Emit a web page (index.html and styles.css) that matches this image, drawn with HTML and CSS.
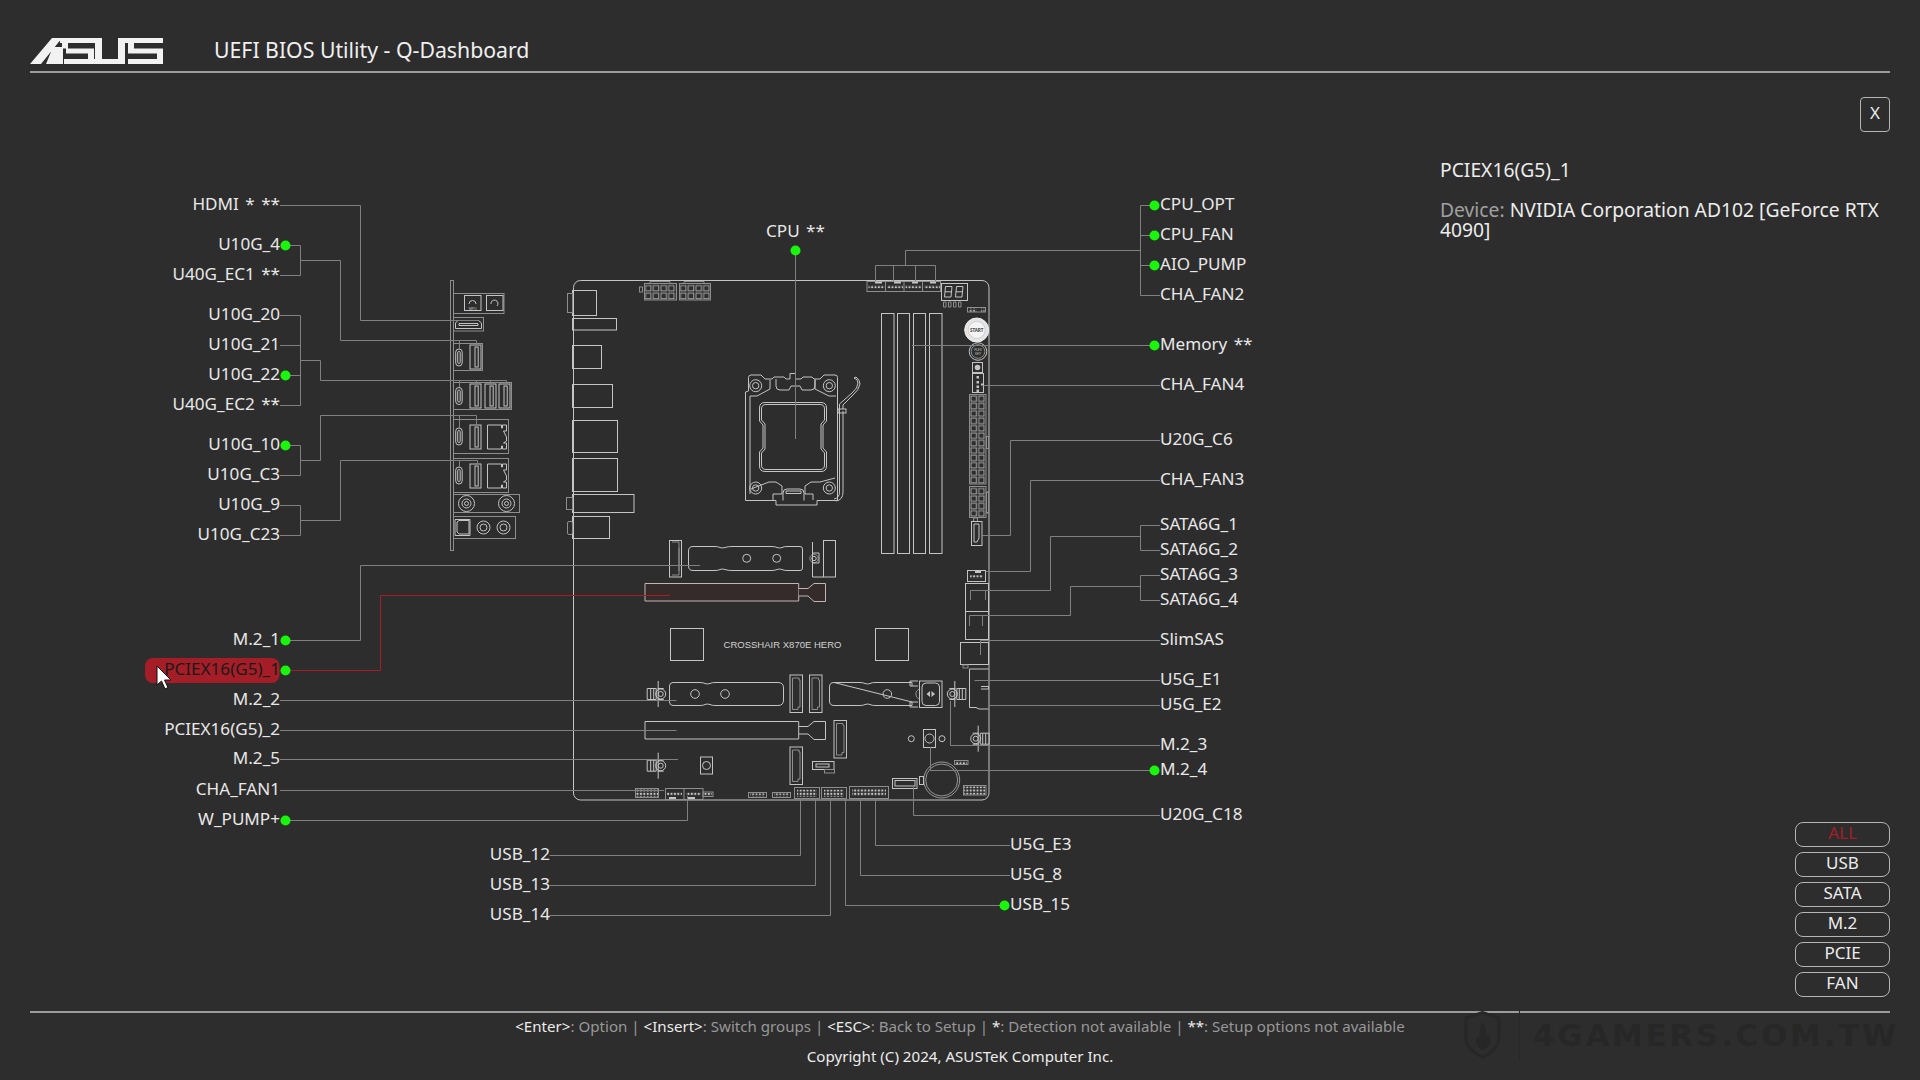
FILE: index.html
```html
<!DOCTYPE html>
<html lang="en">
<head>
<meta charset="utf-8">
<title>UEFI BIOS Utility - Q-Dashboard</title>
<link rel="stylesheet" href="styles.css">
</head>
<body>
<header class="top">
  <svg class="logo" viewBox="30 38 133 26" width="133" height="26" aria-label="ASUS">
    <path d="M30 64 L52 38 H62 L41 64Z M60 38 H102 V43 H60Z M118 38 H163 V43 H118Z M53 47 H63 V64 H46Z M66 48.500 H94 V53.500 H66Z M64 59 H125 V64 H64Z M95 43 H102 V59 H95Z M118 43 H125 V59 H118Z M128 48.500 H163 V53.500 H128Z M128 59 H163 V64 H128Z M62 43 H68 V48.500 H62Z M88 53.500 H94 V59 H88Z M128 43 H134 V48.500 H128Z M157 53.500 H163 V59 H157Z"/>
  </svg>
  <h1 class="title">UEFI BIOS Utility - Q-Dashboard</h1>
</header>

<main class="main">
  <svg class="diagram" viewBox="0 73 1440 938" width="1440" height="938">
    <defs>
      <pattern id="cAtx" patternUnits="userSpaceOnUse" x="970" y="395" width="7.700" height="7.400"><rect x="1" y="1" width="5.400" height="5.400" class="cell"/></pattern>
      <pattern id="c8p" patternUnits="userSpaceOnUse" x="970" y="487.500" width="7.700" height="7.400"><rect x="1" y="1" width="5.400" height="5.400" class="cell"/></pattern>
      <pattern id="cP1" patternUnits="userSpaceOnUse" x="644.500" y="284.500" width="7.700" height="7.700"><rect x="1" y="1" width="5.500" height="5.500" class="cell"/></pattern>
      <pattern id="cP2" patternUnits="userSpaceOnUse" x="679.500" y="284.500" width="7.700" height="7.700"><rect x="1" y="1" width="5.500" height="5.500" class="cell"/></pattern>
      <pattern id="dots" patternUnits="userSpaceOnUse" width="3.400" height="3.400"><rect x="0.700" y="0.700" width="2" height="2" class="dotfill"/></pattern>
      <g id="usbc"><rect x="0" y="0" width="6.500" height="17" rx="3.200" class="part"/><rect x="2" y="2.500" width="2.500" height="12" rx="1.200" class="part"/></g>
      <g id="usba"><rect x="0" y="0" width="11" height="24" class="part"/><rect x="5" y="2" width="3.200" height="20" class="part"/></g>
      <g id="rj45"><path class="part" d="M0 0 H14 V3 H15 V0 H19 V6 H16 L19 12 V16 L16 18 H19 V24 H15 V21 H14 V24 H0Z"/></g>
      <g id="standoff">
        <circle r="5" class="part"/><circle r="2.500" class="part"/><path class="part" d="M-3 -5.500 H3 M-3 5.500 H3"/>
        <path class="part" d="M-2.500 -13 V13 M-13.500 -5.500 H-4.500 V5.500 H-13.500Z M-10 -5.500 V5.500 M-7 -5.500 V5.500"/>
      </g>
      <g id="mslot"><rect width="12.500" height="37.500" class="part"/><path class="dim" d="M2.500 3 H9 V5 H10 V32 H8 V34.500 H2.500Z"/></g>
    </defs>

    <!-- I/O shield -->
    <g>
      <rect x="450.500" y="280.500" width="3" height="270" class="dim"/>
      <rect x="453.500" y="293.500" width="50.500" height="20" class="dim"/>
      <rect x="464.500" y="295.500" width="16.500" height="15" class="part"/><rect x="486.500" y="295.500" width="16.500" height="15" class="part"/>
      <path class="part" d="M469 304 a3.500 3.500 0 1 1 7 0 M491 304 a3.500 3.500 0 1 1 6 2"/>
      <text x="472.700" y="309.500" class="tiny" text-anchor="middle">MPO</text>
      <rect x="453.500" y="317.500" width="30" height="13.500" class="dim"/>
      <path class="part" d="M455.500 323 L458 320.500 H478.500 L481.500 323 V328.500 H455.500Z M459 323.500 H478 V325.500 H459Z"/>
      <rect x="453.500" y="343.500" width="29" height="27" class="dim"/>
      <use href="#usbc" x="455.700" y="349"/><use href="#usba" x="470" y="345"/>
      <rect x="453.500" y="382.500" width="58" height="27" class="dim"/>
      <use href="#usbc" x="455.700" y="387.500"/><use href="#usba" x="470" y="384"/><use href="#usba" x="485" y="384"/><use href="#usba" x="499" y="384"/>
      <rect x="453.500" y="419.500" width="55" height="34" class="dim"/>
      <use href="#usbc" x="455.700" y="428"/><use href="#usba" x="470" y="425"/><use href="#rj45" x="487.500" y="425"/>
      <rect x="453.500" y="458.500" width="55" height="34" class="dim"/>
      <use href="#usbc" x="455.700" y="467"/><use href="#usba" x="470" y="464"/><use href="#rj45" x="487.500" y="464"/>
      <rect x="453.500" y="494.500" width="66" height="18" class="dim"/>
      <circle cx="466.500" cy="503.500" r="8" class="part"/><circle cx="466.500" cy="503.500" r="4.500" class="part"/><circle cx="466.500" cy="503.500" r="2" class="part"/>
      <circle cx="506.500" cy="503.500" r="8" class="part"/><circle cx="506.500" cy="503.500" r="4.500" class="part"/><circle cx="506.500" cy="503.500" r="2" class="part"/>
      <rect x="453.500" y="516.500" width="62" height="22" class="dim"/>
      <path class="part" d="M455 519.500 H470 V535.500 H455Z M457 522 L459 520.500 H469 V534 H459 L457 532Z"/>
      <circle cx="483.500" cy="527.500" r="6.500" class="part"/><circle cx="483.500" cy="527.500" r="3.500" class="part"/>
      <circle cx="503.500" cy="527.500" r="6.500" class="part"/><circle cx="503.500" cy="527.500" r="3.500" class="part"/>
    </g>

    <!-- board -->
    <g>
      <rect x="573.500" y="280.500" width="415.500" height="519.500" rx="7" class="part"/>
      <rect x="572.500" y="290.500" width="24" height="25" class="part"/><rect x="567.500" y="293.500" width="5" height="19" class="dim"/>
      <rect x="572.500" y="318.500" width="44" height="11.500" class="part"/>
      <rect x="572.500" y="345.500" width="29" height="23" class="part"/>
      <rect x="572.500" y="384.500" width="40" height="23" class="part"/>
      <rect x="572.500" y="420.500" width="45" height="32" class="part"/>
      <rect x="572.500" y="458.500" width="45" height="33" class="part"/>
      <rect x="572.500" y="494.500" width="61.500" height="18" class="part"/><rect x="566.500" y="497.500" width="6" height="12" class="dim"/>
      <rect x="572.500" y="516.500" width="37" height="22" class="part"/><rect x="567.500" y="521.500" width="5" height="13" rx="1.500" class="dim"/>

      <!-- power -->
      <rect x="639.500" y="287" width="3" height="5" class="dim"/>
      <rect x="644.500" y="284.500" width="31" height="15.500" fill="url(#cP1)"/>
      <rect x="644.500" y="283.500" width="32" height="16.500" class="dim"/><path class="dim" d="M650 283.500 V281.500 H670 V283.500"/>
      <rect x="679.500" y="284.500" width="31" height="15.500" fill="url(#cP2)"/>
      <rect x="679.500" y="283.500" width="31" height="16.500" class="dim"/><path class="dim" d="M684 283.500 V281.500 H704 V283.500"/>

      <!-- fans top -->
      <rect x="867" y="281.500" width="73.500" height="10" class="dim"/>
      <path class="dim" d="M885.500 281.500 V291.500 M904 281.500 V291.500 M922.500 281.500 V291.500"/>
      <rect x="868.500" y="285" width="16" height="3.500" fill="url(#dots)"/><rect x="887" y="285" width="16" height="3.500" fill="url(#dots)"/><rect x="905.500" y="285" width="16" height="3.500" fill="url(#dots)"/><rect x="924" y="285" width="16" height="3.500" fill="url(#dots)"/>
      <path class="fillpart" d="M875 281.500 h7 v2 h-7z M894 281.500 h7 v2 h-7z M912 281.500 h6 v2 h-6z M930 281.500 h6 v2 h-6z"/>

      <!-- debug LED -->
      <rect x="941.500" y="283.500" width="26" height="17" class="part"/>
      <path class="part" d="M945.500 286.500 H952 L951 297 H944.500Z M945 291.800 H951.500 M956.500 286.500 H963 L962 297 H955.500Z M956 291.800 H962.500"/>
      <path class="dim" d="M943.500 302 h2.500 v5 h-2.500z M948.500 302 h2.500 v5 h-2.500z M953.500 302 h2.500 v5 h-2.500z M958.500 302 h2.500 v5 h-2.500z"/>
      <rect x="967.500" y="307.500" width="18" height="4.500" class="dim"/>
      <rect x="969" y="308.500" width="7.500" height="3" fill="url(#dots)"/><rect x="981" y="308.500" width="3.500" height="3" fill="url(#dots)"/>

      <!-- DIMMs -->
      <rect x="881.500" y="313.500" width="12.500" height="240" class="part"/>
      <rect x="897.500" y="313.500" width="12" height="240" class="part"/>
      <rect x="913.500" y="313.500" width="12" height="240" class="part"/>
      <rect x="929.500" y="313.500" width="12.500" height="240" class="part"/>

      <!-- buttons -->
      <circle cx="976.700" cy="330" r="12" class="startbtn"/>
      <circle cx="976.700" cy="330" r="8.500" class="startin"/>
      <text x="976.700" y="332" class="starttext" text-anchor="middle">START</text>
      <circle cx="978" cy="351.500" r="8.800" class="part"/><circle cx="978" cy="351.500" r="6.800" class="dim"/>
      <text x="978" y="351" class="tiny" text-anchor="middle">FLEX</text><text x="978" y="355" class="tiny" text-anchor="middle">KEY</text>
      <rect x="972.500" y="362.500" width="10" height="10" class="part"/><circle cx="977.500" cy="367.500" r="2.800" class="fillpart"/>
      <rect x="972.500" y="373.500" width="11" height="19" class="part"/>
      <path class="fillpart" d="M976.500 376 h2.500 v2.500 h-2.500z M976.500 381 h2.500 v2.500 h-2.500z M976.500 385.500 h2.500 v2.500 h-2.500z M976.500 389.500 h2.500 v2.500 h-2.500z M981 383.500 h2 v2 h-2z"/>

      <!-- ATX -->
      <rect x="970" y="395" width="15.400" height="88.800" fill="url(#cAtx)"/>
      <rect x="969.500" y="394.500" width="16.500" height="89.500" class="dim"/>
      <rect x="986.500" y="436.500" width="2" height="12" class="dim"/>
      <rect x="970" y="487.500" width="15.400" height="29.600" fill="url(#c8p)"/>
      <rect x="969.500" y="486.500" width="16.500" height="31" class="dim"/>
      <rect x="986.500" y="492" width="2" height="21" class="dim"/>
      <rect x="973.500" y="518" width="4" height="3.500" class="dim"/>
      <rect x="971.500" y="521.500" width="10.500" height="24" class="part"/>
      <path class="part" d="M974 524 H979 V538 L977 542 H974Z"/>

      <!-- socket -->
      <g>
        <path class="part" d="M745.500 500.500 V392 L748.500 391 V377.500 Q748.500 375 751 375 H761 L765 379 H772 L774 377 H784 L786 379 H790 V373.500 H795.500 V379 H801 L803 377 H812 L814 379 H820 L824 375 H835 Q837.500 375 837.500 377.500 V500.500 H817 V505 H776 V500.500Z"/>
        <path class="part" d="M750 396 V494 M750 396 H757 L770 389 V380 M836 396 H829 L815 389 V380"/>
        <path class="part" d="M776 379 V386 Q776 390 780 390 H789 L791 386 H800 L802 390 H811 Q815 390 815 386 V379"/>
        <path class="part" d="M751 489 L769 482 H776 L782 486 V494 H773 V500 M835 478 L820 482 H811 L805 486 V494 H813 V500"/>
        <path class="part" d="M783 500.500 V493 Q783 489 787 489 H800 Q804 489 804 493 V500.500 M786 491 H801 V493.500 H786Z"/>
        <path class="part" d="M765 402.500 H821 Q826.500 402.500 826.500 408 V421 L823 425 V448 L826.500 452 V466 Q826.500 471.500 821 471.500 H765 Q759.500 471.500 759.500 466 V452 L763 448 V425 L759.500 421 V408 Q759.500 402.500 765 402.500Z"/>
        <path class="part" d="M766 404.500 H820 Q824.500 404.500 824.500 409 V420 L821 424 V449 L824.500 453 V465 Q824.500 469.500 820 469.500 H766 Q761.500 469.500 761.500 465 V453 L765 449 V424 L761.500 420 V409 Q761.500 404.500 766 404.500Z"/>
        <circle cx="755.700" cy="385.700" r="6" class="part"/><circle cx="755.700" cy="385.700" r="3.200" class="part"/>
        <circle cx="829.300" cy="385.700" r="6" class="part"/><circle cx="829.300" cy="385.700" r="3.200" class="part"/>
        <circle cx="755.700" cy="488" r="6" class="part"/><circle cx="755.700" cy="488" r="3.200" class="part"/>
        <circle cx="829.300" cy="488" r="6" class="part"/><circle cx="829.300" cy="488" r="3.200" class="part"/>
        <path class="part" d="M839.500 404 V492 Q839.500 498 834 499 M843 411 V492 Q843 500 836 501"/>
        <path class="part" d="M839.500 404 L852 393 Q858 388 858 383 Q858 379 854 378 L856 377 Q860 380 860 384 Q859 390 853 395 L843 405 V409"/>
        <rect x="838" y="409" width="8" height="4" class="part"/>
      </g>

      <!-- M.2_1 area -->
      <rect x="669.500" y="540.500" width="12" height="36.500" class="part"/>
      <path class="dim" d="M672 542 H679 V575 H672 M679 548 V571"/>
      <path class="part" d="M693 546.500 H715 Q718 546.500 720 547.500 Q722 548.500 725 547.500 Q728 546.500 732 546.500 H772 Q775 546.500 777 547.500 Q780 548.500 782 547.500 Q784 546.500 787 546.500 H800 Q802.500 546.500 802.500 549 V568 Q802.500 570.500 800 570.500 H787 Q784 570.500 782 569.500 Q780 568.500 777 569.500 Q775 570.500 772 570.500 H732 Q728 570.500 725 569.500 Q722 568.500 720 569.500 Q718 570.500 715 570.500 H693 Q688.500 570.500 688.500 566 V551 Q688.500 546.500 693 546.500Z"/>
      <circle cx="746.700" cy="558.300" r="4" class="part"/><circle cx="776.700" cy="558.300" r="4" class="part"/>
      <circle cx="814" cy="558.500" r="4.200" class="dim"/><circle cx="814" cy="558.500" r="2.200" class="part"/>
      <path class="part" d="M812.500 542 V577 H823.500 M812.500 553 H819 V563 H812.500"/>
      <rect x="823.500" y="540.500" width="12" height="36.500" class="part"/>

      <!-- PCIe 1 (selected) -->
      <path class="pciehl" d="M645 583.500 H798.500 V601.500 H645Z"/>
      <path class="pcieline" d="M645 583.500 H798.700 V601 H645Z"/>
      <path class="pcieline" d="M798.700 588.500 H808 L814 583.500 H825.500 V601.500 H814 L808 596 H798.700"/>

      <!-- chips and silk -->
      <rect x="670.500" y="628.500" width="33" height="32" class="part"/>
      <rect x="875.500" y="628.500" width="33" height="32" class="part"/>
      <text x="723.500" y="647.500" class="silk" textLength="118" lengthAdjust="spacingAndGlyphs">CROSSHAIR X870E HERO</text>

      <!-- M.2_2 -->
      <use href="#standoff" x="660.700" y="694"/>
      <path class="part" d="M673 682.500 H700 Q703 682.500 705 683.500 Q707 684.500 710 683.500 Q712 682.500 715 682.500 H778 Q783.500 682.500 783.500 688 V700 Q783.500 705.500 778 705.500 H715 Q712 705.500 710 704.500 Q707 703.500 705 704.500 Q703 705.500 700 705.500 H673 Q669.500 705.500 669.500 702 V686 Q669.500 682.500 673 682.500Z"/>
      <circle cx="695" cy="694" r="4.300" class="part"/><circle cx="725" cy="694" r="4.300" class="part"/>
      <use href="#mslot" x="790" y="675"/>
      <use href="#mslot" x="809.500" y="675"/>

      <!-- M.2_3 -->
      <path class="part" d="M834 682.500 H860 Q863 682.500 865 683.500 Q868 684.500 870 683.500 Q872 682.500 875 682.500 H912 V686 M912 702 V705.500 H875 Q872 705.500 870 704.500 Q868 703.500 865 704.500 Q863 705.500 860 705.500 H834 Q829.500 705.500 829.500 701 V687 Q829.500 682.500 834 682.500Z"/>
      <circle cx="887.300" cy="694" r="4.300" class="part"/>
      <path class="dim" d="M919 689 A5.500 5.500 0 0 0 919 699"/>
      <path class="part" d="M910 681 H918 M910 707 H918 M910 681 V686 H918 M910 707 V702 H918"/>
      <rect x="919.500" y="681" width="22.500" height="26.500" class="part"/>
      <rect x="922" y="683" width="17.500" height="22.500" rx="4" class="part"/>
      <path class="fillpart" d="M926.500 694 L930 691 V697Z M935 694 L931.500 691 V697Z"/>
      <use href="#standoff" transform="translate(952.300 694) scale(-1 1)"/>

      <!-- right connectors -->
      <rect x="967.500" y="570.500" width="18" height="11" class="part"/>
      <rect x="970" y="575" width="13" height="3.500" fill="url(#dots)"/><path class="fillpart" d="M975 571 h6 v2 h-6z"/>
      <rect x="965.500" y="583.500" width="23" height="28" class="part"/><rect x="965.500" y="611.500" width="23" height="28" class="part"/>
      <rect x="960.500" y="642.500" width="28" height="22" class="part"/>
      <rect x="963" y="665" width="5" height="3" class="dim"/>
      <path class="part" d="M988.500 669 H969.500 V707.500 H976 L979 709 H988.500 M981 686.500 H988.500 V689 H981"/>

      <!-- PCIe 2 -->
      <path class="part" d="M645 721.500 H798.700 V739 H645Z"/>
      <path class="part" d="M798.700 726.500 H808 L814 721.500 H825.500 V739.500 H814 L808 734 H798.700"/>
      <use href="#mslot" x="834" y="720.500"/>
      <use href="#mslot" x="790" y="747"/>
      <rect x="812.500" y="761.500" width="21.500" height="8" class="part"/><rect x="816" y="764" width="13" height="3" class="part"/>
      <rect x="824.500" y="769.500" width="10" height="3.500" class="dim"/>

      <use href="#standoff" x="660.700" y="765.700"/>
      <rect x="700.500" y="757" width="12" height="17" class="part"/><circle cx="706.500" cy="765.500" r="4" class="part"/>
      <circle cx="911.300" cy="738.700" r="3" class="part"/><circle cx="942" cy="738.700" r="3" class="part"/>
      <rect x="923.500" y="729.500" width="12" height="18" class="part"/><circle cx="929.500" cy="738.500" r="4.500" class="part"/>
      <use href="#standoff" transform="translate(975.700 738.700) scale(-1 1)"/>
      <circle cx="941.700" cy="780" r="18" class="thin"/><circle cx="941.700" cy="780" r="16" class="thin"/>
      <rect x="919.500" y="776.500" width="4" height="8" class="part"/>
      <rect x="954.500" y="760.500" width="13.500" height="4" class="dim"/><rect x="956" y="761" width="11" height="3" fill="url(#dots)"/>
      <rect x="892.500" y="778.500" width="24.500" height="10" class="part"/><rect x="895" y="780.500" width="20" height="5.500" class="part"/>

      <!-- bottom headers -->
      <rect x="635.500" y="788.500" width="23" height="9" class="dim"/><rect x="636" y="789" width="22" height="8" fill="url(#dots)"/>
      <rect x="665.500" y="788.500" width="37.500" height="11" class="dim"/><path class="dim" d="M684 788.500 V799.500"/>
      <rect x="667" y="792" width="15" height="3.500" fill="url(#dots)"/><rect x="686" y="792" width="15" height="3.500" fill="url(#dots)"/>
      <path class="fillpart" d="M669 797 h7 v2 h-7z M688 797 h7 v2 h-7z"/>
      <rect x="703" y="792" width="10" height="4.500" class="dim"/><rect x="704" y="793" width="8" height="3" fill="url(#dots)"/>
      <rect x="748.500" y="792.500" width="18" height="5" class="dim"/><rect x="750" y="793.500" width="15" height="3" fill="url(#dots)"/>
      <rect x="772.500" y="792.500" width="18" height="5" class="dim"/><rect x="774" y="793.500" width="15" height="3" fill="url(#dots)"/>
      <rect x="794.500" y="787.500" width="25" height="11" class="dim"/><rect x="797" y="789.500" width="20" height="7.500" fill="url(#dots)"/>
      <rect x="821.500" y="787.500" width="25" height="11" class="dim"/><rect x="824" y="789.500" width="20" height="7.500" fill="url(#dots)"/>
      <rect x="849.500" y="786.500" width="39" height="12" class="dim"/><rect x="852" y="788.500" width="34" height="7.500" fill="url(#dots)"/>
      <rect x="963.500" y="785.500" width="22.500" height="9.500" class="dim"/><rect x="964" y="786.500" width="21" height="8" fill="url(#dots)"/>
    </g>

    <!-- wires -->
    <g class="wires">
      <path d="M280 205.500 H360.500 V320.500 H478"/>
      <path d="M287 245.500 H300.500 V275.500 H280 M300.500 260.500 H340.500 V340.500 H476.500 V345 M459.500 340.500 V349"/>
      <path d="M280 315.500 H300.500 V405.500 H280 M280 345.500 H300.500 M287 375.500 H300.500 M300.500 360.500 H320.500 V380.500 H506.500 V384 M459.500 380.500 V387 M476.500 380.500 V384 M490.500 380.500 V384"/>
      <path d="M287 445.500 H300.500 V475.500 H280 M300.500 460.500 H320.500 V415.500 H476.500 V425 M459.500 415.500 V428"/>
      <path d="M280 505.500 H300.500 V535.500 H280 M300.500 520.500 H340.500 V460.500 H477.500 V464 M459.500 460.500 V467"/>
      <path d="M287 640.500 H360.500 V565.500 H700"/>
      <path d="M280 700.500 H676.500 M280 730.500 H676.500 M280 759.500 H678 M280 790.500 H664 M287 820.500 H687.500 V796"/>
      <path d="M549.500 855.500 H800.500 V798 M549.500 885.500 H815.500 V798 M549.500 915.500 H830.500 V798"/>
      <path d="M1004 905.500 H845.500 V798 M1010 875.500 H860.500 V798 M1010 845.500 H875.500 V798"/>
      <path d="M795.500 250 V439"/>
      <path d="M875.500 281 V265.500 H935.500 V281 M893.500 265.500 V281 M915.500 265.500 V281 M905.500 265.500 V250.500 H1140.500 M1150 205.500 H1140.500 V295.500 H1160 M1150 235.500 H1140.500 M1150 265.500 H1140.500"/>
      <path d="M912 345.500 H1150 M983.500 385.500 H1160"/>
      <path d="M1160 440.500 H1010.500 V535.500 H981.500"/>
      <path d="M1160 480.500 H1030.500 V571.500 H985.500"/>
      <path d="M1160 525.500 H1140.500 V550.500 H1160 M1140.500 536.500 H1050.500 V590.500 H970.500 V600 M985.500 590.500 V600"/>
      <path d="M1160 575.500 H1140.500 V600.500 H1160 M1140.500 586.500 H1070.500 V615.500 H969.500 V626 M982.500 615.500 V626"/>
      <path d="M1160 640.500 H980.500 V655"/>
      <path d="M1160 680.500 H974.500 M1160 705.500 H988.500"/>
      <path d="M1160 745.500 H950.500 V701"/>
      <path d="M1150 770.500 H930.500 M930.500 747 V770.500"/>
      <path d="M1160 815.500 H913.500 V787"/>
    </g>
    <path class="wirered" d="M287 670.500 H380.500 V595.500 H670"/>

    <!-- highlight and status dots -->
    <rect x="145" y="658" width="134.500" height="25" rx="8" class="hilite"/>
    <g class="ok">
      <circle cx="285.500" cy="245.500" r="5"/><circle cx="285.500" cy="375.500" r="5"/><circle cx="285.500" cy="445.500" r="5"/>
      <circle cx="285.500" cy="640.500" r="5"/><circle cx="285.500" cy="670.500" r="5"/><circle cx="285.500" cy="820.500" r="5"/>
      <circle cx="795.500" cy="250.500" r="5"/>
      <circle cx="1154.500" cy="205.500" r="5"/><circle cx="1154.500" cy="235.500" r="5"/><circle cx="1154.500" cy="265.500" r="5"/>
      <circle cx="1154.500" cy="345.500" r="5"/><circle cx="1154.500" cy="770.500" r="5"/><circle cx="1004.500" cy="905.500" r="5"/>
    </g>

    <!-- labels -->
    <g class="labels-left">
      <text x="280" y="210">HDMI * **</text>
      <text x="280" y="250">U10G_4</text>
      <text x="280" y="280">U40G_EC1 **</text>
      <text x="280" y="320">U10G_20</text>
      <text x="280" y="350">U10G_21</text>
      <text x="280" y="380">U10G_22</text>
      <text x="280" y="410">U40G_EC2 **</text>
      <text x="280" y="450">U10G_10</text>
      <text x="280" y="480">U10G_C3</text>
      <text x="280" y="510">U10G_9</text>
      <text x="280" y="540">U10G_C23</text>
      <text x="280" y="645">M.2_1</text>
      <text x="280" y="675" class="active">PCIEX16(G5)_1</text>
      <text x="280" y="705">M.2_2</text>
      <text x="280" y="735">PCIEX16(G5)_2</text>
      <text x="280" y="764">M.2_5</text>
      <text x="280" y="795">CHA_FAN1</text>
      <text x="280" y="825">W_PUMP+</text>
      <text x="550" y="860">USB_12</text>
      <text x="550" y="890">USB_13</text>
      <text x="550" y="920">USB_14</text>
    </g>
    <text x="795.500" y="237" class="label-mid">CPU **</text>
    <g class="labels-right">
      <text x="1160" y="210">CPU_OPT</text>
      <text x="1160" y="240">CPU_FAN</text>
      <text x="1160" y="270">AIO_PUMP</text>
      <text x="1160" y="300">CHA_FAN2</text>
      <text x="1160" y="350">Memory **</text>
      <text x="1160" y="390">CHA_FAN4</text>
      <text x="1160" y="445">U20G_C6</text>
      <text x="1160" y="485">CHA_FAN3</text>
      <text x="1160" y="530">SATA6G_1</text>
      <text x="1160" y="555">SATA6G_2</text>
      <text x="1160" y="580">SATA6G_3</text>
      <text x="1160" y="605">SATA6G_4</text>
      <text x="1160" y="645">SlimSAS</text>
      <text x="1160" y="685">U5G_E1</text>
      <text x="1160" y="710">U5G_E2</text>
      <text x="1160" y="750">M.2_3</text>
      <text x="1160" y="775">M.2_4</text>
      <text x="1160" y="820">U20G_C18</text>
      <text x="1010" y="850">U5G_E3</text>
      <text x="1010" y="880">U5G_8</text>
      <text x="1010" y="910">USB_15</text>
    </g>

    <path class="cursor" d="M157 666 V685 L161.500 681 L165 689 L168 687.500 L164.500 680 H171Z"/>
  </svg>

  <aside class="side">
    <div class="close">X</div>
    <div class="device-name">PCIEX16(G5)_1</div>
    <div class="device-info">
      <div><span class="muted">Device:</span> <span>NVIDIA Corporation AD102 [GeForce RTX</span></div>
      <div>4090]</div>
    </div>
    <div class="filters">
      <div class="filter filter-on">ALL</div>
      <div class="filter">USB</div>
      <div class="filter">SATA</div>
      <div class="filter">M.2</div>
      <div class="filter">PCIE</div>
      <div class="filter">FAN</div>
    </div>
  </aside>
</main>

<footer class="bottom">
  <div class="hints"><b>&lt;Enter&gt;</b>: Option | <b>&lt;Insert&gt;</b>: Switch groups | <b>&lt;ESC&gt;</b>: Back to Setup | <b>*</b>: Detection not available | <b>**</b>: Setup options not available</div>
  <div class="copy">Copyright (C) 2024, ASUSTeK Computer Inc.</div>
  <div class="watermark">
    <svg class="shield" viewBox="0 0 37 48" width="37" height="48">
      <path class="shield-o" d="M2 7 L18.500 1.500 L35 7 V27 Q35 38 18.500 46 Q2 38 2 27Z"/>
      <path class="shield-f" d="M19 11 Q24 20 22 26 Q25 25 25 22 Q29 30 23 36 Q20 39 18 39 Q12 36 12 29 Q13 26 14 25 Q15 28 16 28 Q14 19 19 11Z"/>
    </svg>
    <span class="wm-bar"></span>
    <span class="wm-text">4GAMERS.COM.TW</span>
  </div>
</footer>
</body>
</html>
```

FILE: styles.css
```css
* { box-sizing: border-box; }
html, body { margin: 0; height: 100%; }
body {
  width: 1920px;
  height: 1080px;
  overflow: hidden;
  display: flex;
  flex-direction: column;
  background: #2d2d2d;
  color: #ececec;
  font-family: "Noto Sans", sans-serif;
}

/* header */
.top {
  height: 73px;
  margin: 0 30px;
  padding-top: 38px;
  display: flex;
  align-items: flex-start;
  gap: 51px;
  border-bottom: 2px solid #9c9c9c;
  flex: none;
}
.logo { display: block; fill: #f2f2f2; filter: blur(0.4px); flex: none; }
.title {
  margin: -1px 0 0;
  font-size: 21.250px;
  line-height: 26px;
  font-weight: 400;
  color: #f0f0f0;
}

/* main */
.main { flex: 1; display: flex; min-height: 0; }
.diagram { display: block; flex: none; font-family: "Noto Sans", sans-serif; font-size: 17.100px; word-spacing: 2px; }
.side {
  flex: 1;
  padding: 24px 30px 14px 0;
  display: flex;
  flex-direction: column;
  min-width: 0;
}
.close {
  align-self: flex-end;
  width: 30px;
  height: 35px;
  border: 1px solid #b5b5b5;
  border-radius: 4px;
  font-size: 17px;
  line-height: 29px;
  text-align: center;
}
.device-name { margin-top: 28px; font-size: 19.300px; line-height: 20px; }
.device-info { margin-top: 20px; font-size: 19.300px; line-height: 20px; }
.muted { color: #a0a0a0; }
.filters { margin-top: auto; display: flex; flex-direction: column; gap: 5px; align-self: flex-end; }
.filter {
  width: 95px;
  height: 25px;
  border: 1px solid #b5b5b5;
  border-radius: 8px;
  font-size: 17px;
  line-height: 20px;
  text-align: center;
}
.filter-on { color: #a51d26; }

/* footer */
.bottom {
  position: relative;
  height: 69px;
  flex: none;
  margin: 0 30px;
  border-top: 2px solid #9c9c9c;
  font-size: 15.120px;
  text-align: center;
}
.hints { height: 26px; line-height: 26px; color: #989898; }
.hints b { font-weight: 400; color: #ececec; }
.copy { height: 28px; margin-top: 3px; line-height: 28px; color: #ececec; }
.watermark {
  position: absolute;
  left: 1434px;
  top: -3px;
  display: flex;
  align-items: center;
  height: 50px;
  color: #272727;
}
.shield { display: block; flex: none; }
.shield-o { fill: none; stroke: #272727; stroke-width: 3; }
.shield-f { fill: #272727; }
.wm-bar { width: 1px; height: 52px; margin: 0 13px 0 18px; background: #282828; }
.wm-text {
  font-family: "DejaVu Sans", sans-serif;
  font-weight: 700;
  font-size: 31px;
  letter-spacing: 2.700px;
  white-space: nowrap;
}

/* diagram */
.part { fill: none; stroke: #c4c4c4; stroke-width: 1; }
.dim { fill: none; stroke: #8e8e8e; stroke-width: 1; }
.thin { fill: none; stroke: #c4c4c4; stroke-width: 0.7; }
.cell { fill: none; stroke: #bdbdbd; stroke-width: 0.8; }
.dotfill { fill: #c4c4c4; }
.fillpart { fill: #c4c4c4; stroke: none; }
.wires path { fill: none; stroke: #808080; stroke-width: 1; }
.wirered { fill: none; stroke: #a51d26; stroke-width: 1; }
.pciehl { fill: #3d2b2b; }
.pcieline { fill: #352b2b; stroke: #c4b4b4; stroke-width: 1; }
.hilite { fill: #a51d26; }
.ok circle { fill: #19f50c; }
.labels-left text { text-anchor: end; fill: #e8e8e8; }
.labels-left .active { fill: #1a1a1a; }
.labels-right text { text-anchor: start; fill: #e8e8e8; }
.label-mid { text-anchor: middle; fill: #e8e8e8; }
.startbtn { fill: #e4e4e4; stroke: #f0f0f0; }
.startin { fill: #f4f4f4; stroke: #bcbcbc; stroke-width: 0.6; }
.starttext { font-size: 4.500px; fill: #444; font-weight: 700; word-spacing: 0; }
.tiny { font-size: 3.500px; fill: #c4c4c4; word-spacing: 0; }
.silk { font-family: "Liberation Sans", sans-serif; font-size: 8.500px; fill: #d2d2d2; word-spacing: 0; }
.cursor { fill: #fff; stroke: #111; stroke-width: 1; }
```
